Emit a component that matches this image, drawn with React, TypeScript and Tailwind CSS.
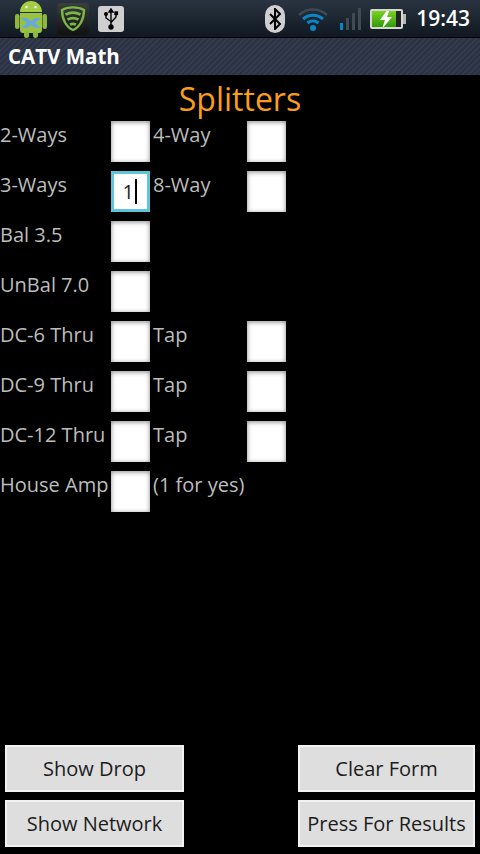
import React from "react";

const FONT = "font-['Open_Sans','Noto_Sans',sans-serif]";

type Row = {
  label: string;
  second?: string;
  secondInput?: boolean;
  active?: boolean;
};

const ROWS: Row[] = [
  { label: "2-Ways", second: "4-Way", secondInput: true },
  { label: "3-Ways", second: "8-Way", secondInput: true, active: true },
  { label: "Bal 3.5" },
  { label: "UnBal 7.0" },
  { label: "DC-6 Thru", second: "Tap", secondInput: true },
  { label: "DC-9 Thru", second: "Tap", secondInput: true },
  { label: "DC-12 Thru", second: "Tap", secondInput: true },
  { label: "House Amp", second: "(1 for yes)" },
];

const AndroidIcon = () => (
  <svg width="32" height="38" viewBox="0 0 32 38">
    <rect x="0" y="14" width="4.500" height="15" rx="2.200" fill="#8fb83a" />
    <rect x="27.500" y="14" width="4.500" height="15" rx="2.200" fill="#8fb83a" />
    <path d="M5 12a11 11 0 0 1 22 0z" fill="#a5cc45" />
    <path d="M5 13h22v17a3 3 0 0 1-3 3H8a3 3 0 0 1-3-3z" fill="#98c23f" />
    <rect x="9" y="31" width="5" height="7" rx="2.500" fill="#8fb83a" />
    <rect x="18" y="31" width="5" height="7" rx="2.500" fill="#8fb83a" />
    <circle cx="11.500" cy="7" r="1.200" fill="#fff" />
    <circle cx="20.500" cy="7" r="1.200" fill="#fff" />
    <path d="M6 18l6 5-6 5h6l4-3 4 3h6l-6-5 6-5h-6l-4 3-4-3z" fill="#69a8dc" />
  </svg>
);

const ShieldIcon = () => (
  <div className="w-[32px] h-[32px] rounded-[4px] bg-gradient-to-b from-[#3c3f3c] to-[#111] flex items-center justify-center">
    <svg width="26" height="27" viewBox="0 0 26 27" fill="none">
      <path d="M2 5c6-3.500 16-3.500 22 0 0 9-4 17-11 20C6 22 2 14 2 5z" stroke="#7ab648" strokeWidth="2.400" />
      <path d="M5.500 9.500c4.500-2.200 10.500-2.200 15 0" stroke="#7ab648" strokeWidth="2.800" />
      <path d="M7.500 14.500c3.200-1.600 7.800-1.600 11 0" stroke="#7ab648" strokeWidth="2.800" />
      <path d="M10 19.500c1.800-.8 4.200-.8 6 0" stroke="#7ab648" strokeWidth="2.800" />
    </svg>
  </div>
);

const UsbIcon = () => (
  <div className="w-[26px] h-[26px] rounded-[3px] bg-[#cfcfcf] flex items-center justify-center">
    <svg width="16" height="22" viewBox="0 0 16 22" fill="none" stroke="#000" strokeWidth="1.400">
      <path d="M8 2v17" />
      <path d="M8 1l-2 3h4z" fill="#000" />
      <path d="M3 7v3l5 3.500" />
      <path d="M13 6v3l-5 5.500" />
      <circle cx="3" cy="6" r="1.300" fill="#000" />
      <rect x="12" y="4" width="2.400" height="2.400" fill="#000" />
      <circle cx="8" cy="19" r="2" fill="#000" />
    </svg>
  </div>
);

const BluetoothIcon = () => (
  <div className="w-[20px] h-[28px] rounded-[10px] bg-[#cfcfcf] flex items-center justify-center">
    <svg width="14" height="22" viewBox="0 0 14 22" fill="none" stroke="#000" strokeWidth="2">
      <path d="M2 6l10 10-5 5V1l5 5L2 16" />
    </svg>
  </div>
);

const WifiIcon = () => (
  <svg width="32" height="26" viewBox="0 0 32 26" fill="none">
    <path d="M2 9c8-7.500 20-7.500 28 0" stroke="#3b4a55" strokeWidth="2.500" />
    <path d="M6 13c6-5 14-5 20 0" stroke="#0a86c6" strokeWidth="3" />
    <path d="M10.500 17c3.200-2.800 7.800-2.800 11 0" stroke="#0a86c6" strokeWidth="3" />
    <circle cx="16" cy="22" r="3" fill="#0a86c6" />
  </svg>
);

const SignalIcon = () => (
  <div className="flex items-end gap-[3px] h-[22px]">
    <div className="w-[3px] h-[7px] bg-[#0a86c6]" />
    <div className="w-[3px] h-[12px] bg-[#3f4a52]" />
    <div className="w-[3px] h-[17px] bg-[#3f4a52]" />
    <div className="w-[3px] h-[22px] bg-[#3f4a52]" />
  </div>
);

const BatteryIcon = () => (
  <div className="flex items-center">
    <div className="relative w-[33px] h-[20px] border-[2px] border-[#d4d8d0] rounded-[2px] bg-[#222] overflow-hidden">
      <div className="h-full w-[24px] bg-gradient-to-b from-[#7ad321] to-[#2f9a0c]" />
      <svg className="absolute left-[7px] top-[-2px]" width="14" height="20" viewBox="0 0 14 20">
        <path d="M9 0L1 11h5l-3 9 10-12H8l3-8z" fill="#fff" />
      </svg>
    </div>
    <div className="w-[3px] h-[10px] bg-[#b5b8b2]" />
  </div>
);

const StatusBar = () => (
  <div className="h-[38px] shrink-0 flex items-center bg-gradient-to-b from-[#2a3440] to-[#101922] border-b border-[#000]">
    <div className="flex items-center pl-[15px]">
      <div className="mr-[10px]"><AndroidIcon /></div>
      <div className="mr-[9px]"><ShieldIcon /></div>
      <UsbIcon />
    </div>
    <div className="ml-auto flex items-center pr-[10px]">
      <div className="mr-[12px]"><BluetoothIcon /></div>
      <div className="mr-[11px]"><WifiIcon /></div>
      <div className="mr-[9px]"><SignalIcon /></div>
      <div className="mr-[10px]"><BatteryIcon /></div>
      <span className="text-white text-[21px] font-semibold leading-none">19:43</span>
    </div>
  </div>
);

const Field = ({ active }: { active?: boolean }) =>
  active ? (
    <div className="w-[39px] h-[41px] bg-white border-[3px] border-[#5fc4dc] flex items-center justify-end pr-[10px] text-[20px] text-[#222] leading-none">
      1<span className="w-[2px] h-[25px] bg-black ml-[1px]" />
    </div>
  ) : (
    <div className="w-[39px] h-[41px] bg-white shadow-[inset_0_1px_5px_#888]" />
  );

const FormRow = ({ row }: { row: Row }) => (
  <div className="flex h-[50px] text-[#bdbdbd] text-[20px] leading-[28px]">
    <div className="w-[111px] whitespace-nowrap">{row.label}</div>
    <Field active={row.active} />
    {row.second && <div className="w-[94px] ml-[3px] whitespace-nowrap">{row.second}</div>}
    {row.secondInput && <Field />}
  </div>
);

const ActionButton = ({ label }: { label: string }) => (
  <button className="w-full h-[47px] bg-[#dedede] border-[2px] border-[#f2f2f2] text-[#1c1c1c] text-[20px] leading-none">
    {label}
  </button>
);

export default function App() {
  return (
    <div className={`w-[480px] h-[854px] bg-black flex flex-col overflow-hidden ${FONT}`}>
      <StatusBar />
      <div className="h-[37px] shrink-0 flex items-center pl-[8px] bg-[#2e3648] bg-[repeating-linear-gradient(135deg,#323a4c_0px,#323a4c_2px,#2b3244_2px,#2b3244_4px)] text-white text-[20.500px] font-bold">
        CATV Math
      </div>
      <div className="flex-1 flex flex-col">
        <div className="text-center text-[#fa9d1c] text-[32px] leading-[44px] pt-[2px] h-[46px]">Splitters</div>
        {ROWS.map((row) => (
          <FormRow key={row.label} row={row} />
        ))}
        <div className="mt-auto flex justify-between px-[5px] pb-[7px]">
          <div className="w-[179px] flex flex-col gap-[8px]">
            <ActionButton label="Show Drop" />
            <ActionButton label="Show Network" />
          </div>
          <div className="w-[177px] flex flex-col gap-[8px]">
            <ActionButton label="Clear Form" />
            <ActionButton label="Press For Results" />
          </div>
        </div>
      </div>
    </div>
  );
}
